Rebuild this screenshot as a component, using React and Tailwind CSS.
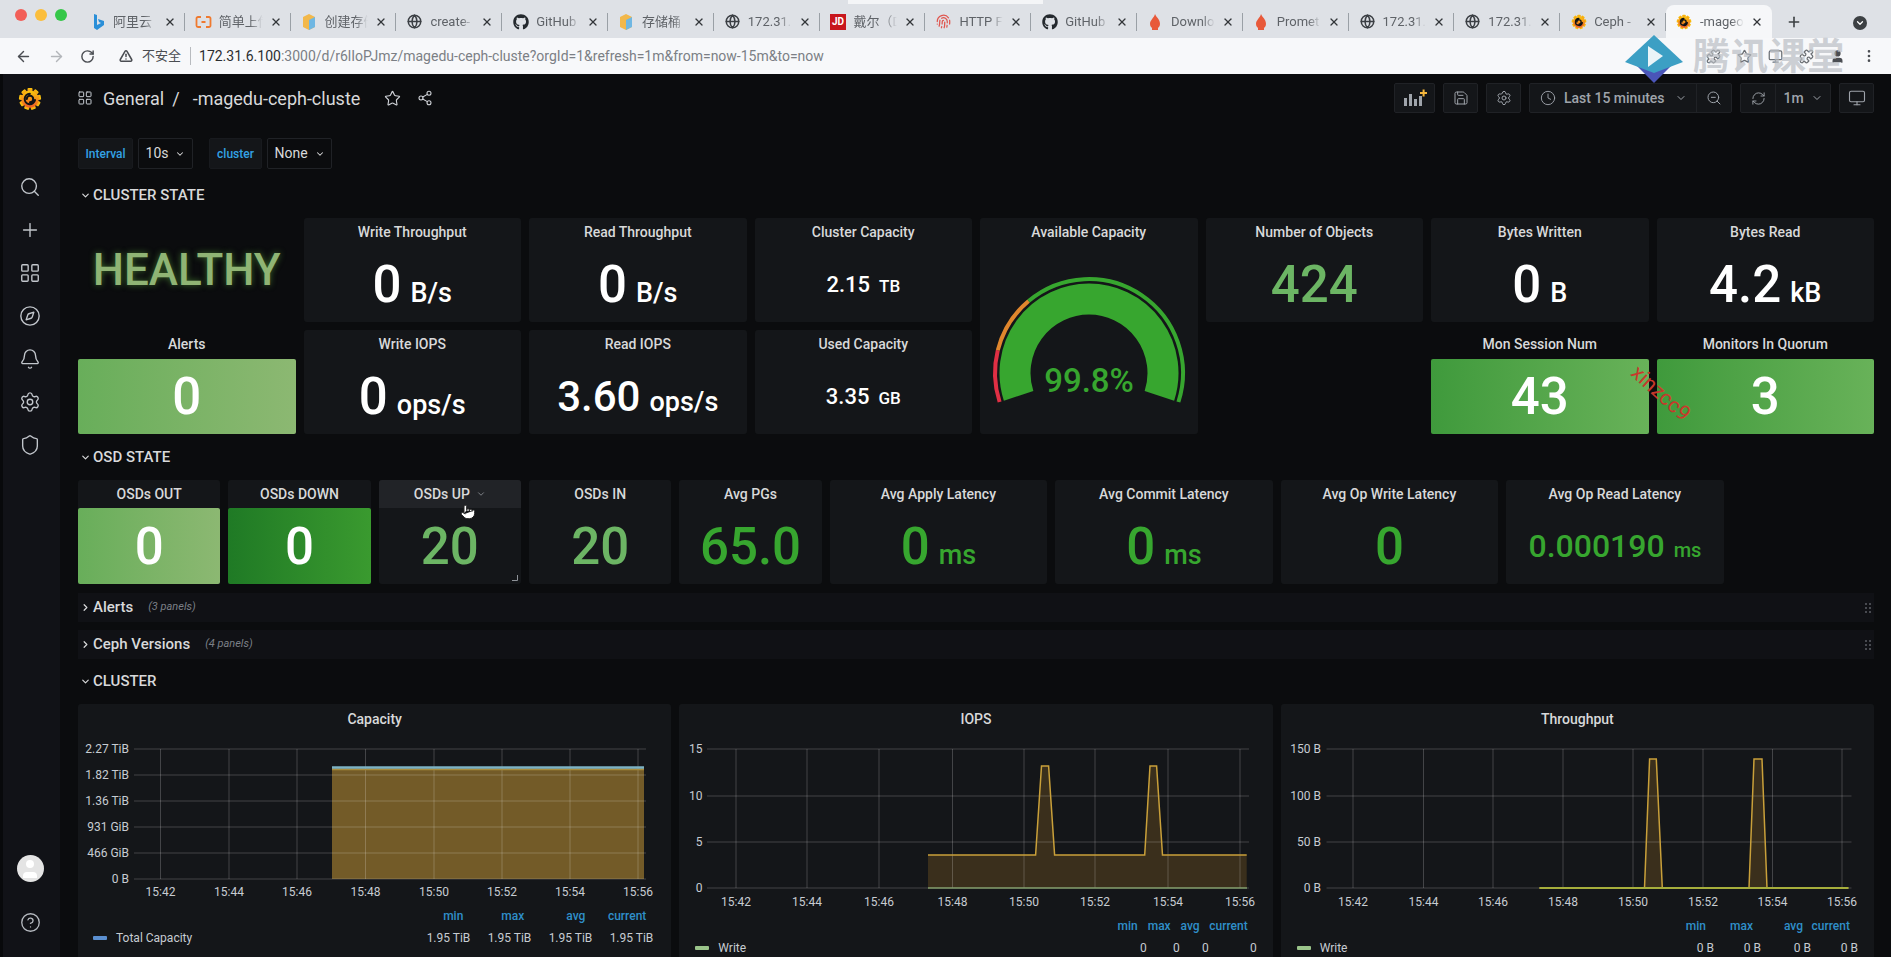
import {
  ArrowLeft, ArrowRight, Bell, ChevronDown, ChevronRight, CircleHelp, Clock, Compass, EllipsisVertical,
  Globe, LayoutGrid, Monitor, Plus, Pointer, Puzzle, RefreshCw, RotateCw, Save, Search, Settings,
  Share2, Shield, Star, TriangleAlert, User, X, ZoomOut, Fingerprint,
} from "lucide-react";
import { FaGithub } from "react-icons/fa";

function GrafanaLogo({ size = 24 }) {
  const teeth = [0, 40, 80, 120, 160, 200, 240, 280, 320];
  return (
    <svg width={size} height={size} viewBox="0 0 24 24">
      <defs>
        <linearGradient id={`gf${size}`} x1="0" y1="1" x2="0" y2="0">
          <stop offset="0" stopColor="#f05a28" />
          <stop offset="1" stopColor="#fbca0a" />
        </linearGradient>
      </defs>
      {teeth.map((a) => (
        <rect key={a} x="9.5" y="1" width="5" height="6" rx="1" fill={`url(#gf${size})`} transform={`rotate(${a} 12 12)`} />
      ))}
      <circle cx="12" cy="12" r="8.6" fill={`url(#gf${size})`} />
      <path d="M17 13a5.2 5.2 0 1 1-5.2-6.2M8.8 12a3.2 3.2 0 1 1 3.2 3.2" fill="none" stroke="#111217" strokeWidth="2" strokeLinecap="round" />
    </svg>
  );
}

function TabIcon({ kind }) {
  if (kind === "bing")
    return (
      <svg width="16" height="18" viewBox="0 0 16 18">
        <path d="M4 1l3 1v10l4-2-2-1-1-3 6 2v4l-7 5-3-2z" fill="#2a8fd8" />
      </svg>
    );
  if (kind === "ali")
    return (
      <svg width="17" height="16" viewBox="0 0 17 16" fill="none" stroke="#ef7a30" strokeWidth="1.8">
        <path d="M6 3H3a1.5 1.5 0 0 0-1.5 1.5v7A1.5 1.5 0 0 0 3 13h3M11 3h3a1.5 1.5 0 0 1 1.5 1.5v7A1.5 1.5 0 0 1 14 13h-3M6.5 8h4" />
      </svg>
    );
  if (kind === "doc")
    return (
      <svg width="16" height="18" viewBox="0 0 16 18">
        <path d="M2 4l6-3 6 3v10l-6 3-6-3z" fill="#f2b84b" />
        <path d="M8 7l6-3v10l-6 3z" fill="#6fb7e3" />
      </svg>
    );
  if (kind === "globe") return <Globe size={15} strokeWidth={2.4} className="text-[#3b3f44]" />;
  if (kind === "gh") return <FaGithub size={16} className="text-[#24292e]" />;
  if (kind === "jd")
    return <span className="flex h-[16px] w-[16px] items-center justify-center bg-[#c8161d] text-[10px] font-bold text-white">JD</span>;
  if (kind === "http") return <Fingerprint size={15} className="text-[#e0554e]" />;
  if (kind === "prom")
    return (
      <svg width="14" height="18" viewBox="0 0 14 18">
        <path d="M7 1c1 3 5 5 5 10a5 5 0 0 1-10 0C2 7 6 5 7 1z" fill="#e8593a" />
        <rect x="4" y="15" width="6" height="2" fill="#e8593a" />
      </svg>
    );
  return <GrafanaLogo size={16} />;
}

const tabs = [
  ["bing", "阿里云"], ["ali", "简单上传"], ["doc", "创建存储"], ["globe", "create-"],
  ["gh", "GitHub"], ["doc", "存储桶"], ["globe", "172.31."], ["jd", "戴尔（D"],
  ["http", "HTTP F"], ["gh", "GitHub"], ["prom", "Downlo"], ["prom", "Promet"],
  ["globe", "172.31."], ["globe", "172.31."], ["gf", "Ceph -"], ["gf", "-mageo"],
];

function BrowserBar() {
  return (
    <>
      <div className="relative flex h-[38px] shrink-0 items-end bg-[#dee1e6]">
        <div className="absolute left-[848px] top-0 h-[4px] w-[195px] bg-[#f4f5f7]" />
        <div className="flex w-[79px] gap-[8px] self-center pb-[8px] pl-[15px]">
          <span className="h-[12px] w-[12px] shrink-0 rounded-full bg-[#f25f58]" />
          <span className="h-[12px] w-[12px] shrink-0 rounded-full bg-[#fbbe3c]" />
          <span className="h-[12px] w-[12px] shrink-0 rounded-full bg-[#35c749]" />
        </div>
        {tabs.map(([icon, label], i) => (
          <div
            key={i}
            className={
              i === 15
                ? "flex h-[33px] w-[105.8px] items-center gap-[7px] rounded-t-lg bg-[#f6f7f9] pl-[10px] pr-[9px]"
                : "flex h-[33px] w-[105.8px] items-center gap-[7px] pl-[10px] pr-[9px] [background:linear-gradient(#9aa0a6,#9aa0a6)_right_8px/1px_18px_no-repeat]"
            }
          >
            <span className="flex w-[17px] shrink-0 justify-center"><TabIcon kind={icon} /></span>
            <span className="min-w-0 flex-1 overflow-hidden whitespace-nowrap text-[13px] text-[#5f6368] [mask-image:linear-gradient(to_right,black_70%,transparent)]">
              {label}
            </span>
            <X size={12} strokeWidth={2.6} className="shrink-0 text-[#33363a]" />
          </div>
        ))}
        <Plus size={16} strokeWidth={2.4} className="mb-[8px] ml-[14px] text-[#3c4043]" />
        <span className="mb-[8px] ml-[51px] flex h-[14px] w-[14px] items-center justify-center rounded-full bg-[#3c4043]">
          <ChevronDown size={10} strokeWidth={3} className="text-white" />
        </span>
      </div>
      <div className="relative flex h-[36px] shrink-0 items-center bg-[#f7f8fa] text-[#5f6368]">
        <ArrowLeft size={17} className="ml-[15px] text-[#4a4d52]" />
        <ArrowRight size={17} className="ml-[16px] text-[#b3b6ba]" />
        <RotateCw size={15} strokeWidth={2.3} className="ml-[15px] text-[#4a4d52]" />
        <TriangleAlert size={14} strokeWidth={2.6} className="ml-[24px] text-[#4a4d52]" />
        <span className="ml-[9px] text-[13px] text-[#4a4d52]">不安全</span>
        <span className="ml-[9px] h-[18px] w-px bg-[#b8bbbf]" />
        <span className="ml-[8px] whitespace-nowrap text-[14px] text-[#7b7f85]">
          <span className="text-[#2b2d30]">172.31.6.100</span>:3000/d/r6lIoPJmz/magedu-ceph-cluste?orgId=1&amp;refresh=1m&amp;from=now-15m&amp;to=now
        </span>
        <div className="ml-auto flex items-center gap-[16px] pr-[14px]">
          <Puzzle size={15} className="text-[#6b6f74]" />
          <Star size={15} className="text-[#6b6f74]" />
          <Monitor size={15} className="text-[#6b6f74]" />
          <Puzzle size={15} className="text-[#6b6f74]" />
          <User size={15} fill="currentColor" className="text-[#4a4d52]" />
          <EllipsisVertical size={16} className="text-[#4a4d52]" />
        </div>
        {/* video watermark over the toolbar */}
        <svg width="60" height="50" viewBox="0 0 60 50" className="absolute left-[1624px] top-[-3px]">
          <path d="M12 30l18 18 18-18-4-4-14 8-8-8z" fill="#4a55b8" />
          <path d="M30 0l29 27-29 11L1 27z" fill="#3c9fc4" />
          <path d="M24 11l15 10-15 11z" fill="#eaf4f8" />
        </svg>
        <span className="absolute left-[1693px] top-[1px] text-[37px] font-bold leading-none tracking-[1px] text-[#b9bdc3]/70">腾讯课堂</span>
      </div>
    </>
  );
}

const sideIcons = [Search, Plus, LayoutGrid, Compass, Bell, Settings, Shield];

function Sidebar() {
  return (
    <div className="flex w-[60px] shrink-0 flex-col items-center border-l-[3px] border-[#08090b] bg-[#111217] pr-[3px]">
      <div className="mt-[13px]"><GrafanaLogo size={24} /></div>
      <div className="mt-[65px] flex flex-col items-center gap-[21px]">
        {sideIcons.map((Icon, i) => (
          <Icon key={i} size={22} strokeWidth={1.5} className="text-[#c2c6cc]" />
        ))}
      </div>
      <div className="mt-auto mb-[24px] flex flex-col items-center gap-[30px]">
        <span className="flex h-[27px] w-[27px] items-center justify-center overflow-hidden rounded-full bg-[#e4e4e4]">
          <User size={24} fill="#fff" strokeWidth={0} />
        </span>
        <CircleHelp size={21} strokeWidth={1.5} className="text-[#b6bac0]" />
      </div>
    </div>
  );
}

function ToolBtn({ children, className = "" }) {
  return (
    <div className={`flex h-[30px] items-center justify-center rounded-[2px] border border-[#202226] bg-[#141619] text-[#9fa4ab] ${className}`}>
      {children}
    </div>
  );
}

function TopBar() {
  return (
    <div className="mt-[9px] flex h-[30px] items-center">
      <LayoutGrid size={16} strokeWidth={1.5} className="ml-[-1px] text-[#c7ccd2]" />
      <span className="ml-[10px] text-[18px] text-[#d8d9da]">General</span>
      <span className="ml-[8px] text-[18px] text-[#d8d9da]">/</span>
      <span className="ml-[13px] text-[18px] text-[#d8d9da]">-magedu-ceph-cluste</span>
      <Star size={17} strokeWidth={1.6} className="ml-[24px] text-[#d0d3d8]" />
      <Share2 size={16} strokeWidth={1.6} className="ml-[16px] text-[#d0d3d8]" />
      <div className="ml-auto flex items-center gap-[8px]">
        <ToolBtn className="w-[41px]">
          <svg width="24" height="18" viewBox="0 0 24 18">
            <path d="M1 9h3v8H1zM6 5h3v12H6zM11 10h3v7h-3zM16 7h3v10h-3z" fill="#9fa4ab" />
            <path d="M17 3h2.6V.6h2V3H24v2h-2.4v2.4h-2V5H17z" fill="#f5b73d" />
          </svg>
        </ToolBtn>
        <ToolBtn className="w-[35px]"><Save size={16} strokeWidth={1.5} /></ToolBtn>
        <ToolBtn className="w-[35px]"><Settings size={16} strokeWidth={1.5} /></ToolBtn>
        <ToolBtn className="w-[203px]">
          <div className="flex h-full w-[167px] items-center border-r border-[#202226] pl-[10px] text-[14px] font-medium">
            <Clock size={16} strokeWidth={1.4} />
            <span className="ml-[8px]">Last 15 minutes</span>
            <ChevronDown size={12} className="ml-[10px]" />
          </div>
          <div className="flex flex-1 justify-center"><ZoomOut size={16} strokeWidth={1.5} /></div>
        </ToolBtn>
        <ToolBtn className="w-[91px]">
          <div className="flex h-full w-[35px] items-center justify-center border-r border-[#202226]"><RefreshCw size={15} strokeWidth={1.5} /></div>
          <div className="flex flex-1 items-center justify-center gap-[7px] text-[14px] font-medium">1m <ChevronDown size={12} /></div>
        </ToolBtn>
        <ToolBtn className="w-[35px]"><Monitor size={18} strokeWidth={1.5} /></ToolBtn>
      </div>
    </div>
  );
}

function VarLabel({ children, className }) {
  return (
    <div className={`flex h-[31px] items-center justify-center rounded-[2px] border border-[#181a1e] bg-[#141619] text-[12px] font-medium text-[#33a2e5] ${className}`}>
      {children}
    </div>
  );
}

function VarValue({ children, className }) {
  return (
    <div className={`flex h-[31px] items-center justify-center gap-[7px] rounded-[2px] border border-[#202226] bg-[#0b0c0e] text-[14px] text-[#d8d9da] ${className}`}>
      {children}
      <ChevronDown size={10} strokeWidth={2.5} />
    </div>
  );
}

function SectionTitle({ children, className = "" }) {
  return (
    <div className={`flex h-[26px] items-center pl-[2px] text-[15px] font-medium text-[#d8d9da] ${className}`}>
      <ChevronDown size={11} strokeWidth={2.6} className="mr-[2px] shrink-0" />
      {children}
    </div>
  );
}

function CollapsedRow({ title, count }) {
  return (
    <div className="flex h-[29px] items-center bg-[#101115] pl-[2px]">
      <ChevronRight size={11} strokeWidth={2.6} className="mr-[2px] text-[#d8d9da]" />
      <span className="text-[15px] font-medium text-[#d8d9da]">{title}</span>
      <span className="ml-[15px] text-[11px] italic text-[#7b8087]">{count}</span>
      <div className="ml-auto mr-[3px] grid grid-cols-2 gap-[2px] opacity-60">
        {[0, 1, 2, 3, 4, 5].map((d) => (
          <span key={d} className="h-[2px] w-[2px] rounded-full bg-[#8e9298]" />
        ))}
      </div>
    </div>
  );
}

// big number with a smaller unit, the usual stat panel value
function Val({ v, u, vc = "text-[51px]", uc = "text-[27px]", color = "text-white" }) {
  return (
    <span className={`flex items-baseline font-medium leading-none ${color}`}>
      <span className={vc}>{v}</span>
      {u && <span className={`ml-[9px] ${uc}`}>{u}</span>}
    </span>
  );
}

function Stat({ title, className = "", titleH = "h-[29px]", children, hover }) {
  return (
    <div className={`relative flex flex-col overflow-hidden rounded-[3px] bg-[#141619] ${className}`}>
      <div className={`flex shrink-0 items-center justify-center gap-[6px] text-[14px] font-medium text-[#d8d9da] ${titleH} ${hover ? "bg-[#212327]" : ""}`}>
        {title}
        {hover && <ChevronDown size={10} className="text-[#8e9298]" />}
      </div>
      <div className="flex flex-1 items-center justify-center">{children}</div>
      {hover && (
        <svg width="6" height="6" viewBox="0 0 6 6" className="absolute bottom-[3px] right-[3px]">
          <path d="M5.5 0v5.5H0" fill="none" stroke="#8e9298" />
        </svg>
      )}
    </div>
  );
}

function ColorBox({ bg, children }) {
  return (
    <div className={`flex h-full w-full items-center justify-center self-stretch rounded-[2px] text-[51px] font-medium leading-none text-white ${bg}`}>
      {children}
    </div>
  );
}

const CX = 1089;
const CY = 373;
const polar = (r, deg) => {
  const a = (deg * Math.PI) / 180;
  return `${(CX + r * Math.cos(a)).toFixed(1)} ${(CY - r * Math.sin(a)).toFixed(1)}`;
};
const arc = (r, from, to) => `M${polar(r, from)} A${r} ${r} 0 ${from - to > 180 ? 1 : 0} 1 ${polar(r, to)}`;

function Gauge() {
  return (
    <svg viewBox="980 247 218 187" className="h-[187px] w-[218px]">
      <path d={arc(74, 198, -18)} fill="none" stroke="#37a62f" strokeWidth="31" />
      <path d={arc(94, 198, 166)} fill="none" stroke="#e02f44" strokeWidth="4" />
      <path d={arc(94, 166, 130)} fill="none" stroke="#e0862d" strokeWidth="4" />
      <path d={arc(94, 130, -18)} fill="none" stroke="#37a62f" strokeWidth="4" />
      <text x={CX} y="392" textAnchor="middle" fontSize="33" fontWeight="500" fill="#37a62f" fontFamily="Roboto, sans-serif">99.8%</text>
    </svg>
  );
}

function AxisLabels({ ys, xs, yEnd, xY }) {
  return (
    <g fontSize="12" fill="#c7ccd2" fontFamily="Roboto, sans-serif">
      {ys.map(([label, y]) => (
        <text key={label} x={yEnd} y={y + 4} textAnchor="end">{label}</text>
      ))}
      {xs.map(([label, x]) => (
        <text key={label} x={x} y={xY} textAnchor="middle">{label}</text>
      ))}
    </g>
  );
}

function GridLines({ ys, xs, left, right, top, bottom }) {
  return (
    <g stroke="#fff" strokeOpacity="0.2">
      {ys.map(([label, y]) => (
        <line key={label} x1={left} x2={right} y1={y} y2={y} />
      ))}
      {xs.map(([label, x]) => (
        <line key={label} x1={x} x2={x} y1={top} y2={bottom} />
      ))}
    </g>
  );
}

const times = ["15:42", "15:44", "15:46", "15:48", "15:50", "15:52", "15:54", "15:56"];
const withX = (arr) => times.map((t, i) => [t, arr[i]]);

function CapacityChart() {
  const ys = [["2.27 TiB", 749], ["1.82 TiB", 775], ["1.36 TiB", 801], ["931 GiB", 827], ["466 GiB", 853], ["0 B", 879]];
  const xs = withX([160.5, 229, 297, 365.5, 434, 502, 570, 638]);
  return (
    <svg viewBox="78 734 594 171" className="h-[171px] w-[594px] shrink-0">
      <rect x="332" y="767" width="312" height="112" fill="#735b28" />
      <GridLines ys={ys} xs={xs} left={134} right={646} top={749} bottom={879} />
      <line x1="332" x2="644" y1="769.5" y2="769.5" stroke="#a98c3b" strokeWidth="1.5" />
      <line x1="332" x2="644" y1="767.5" y2="767.5" stroke="#7db3c4" strokeWidth="2.5" />
      <AxisLabels ys={ys} xs={xs} yEnd={129} xY={896} />
    </svg>
  );
}

function IopsChart() {
  const ys = [["15", 749], ["10", 796], ["5", 842], ["0", 888]];
  const xs = withX([735, 806, 878, 951.5, 1023, 1094, 1167, 1239]);
  const line = "M927 855H1034.6L1040.5 766H1047.6L1053.6 855H1143.7L1149 766H1155.6L1161.5 855H1245.7";
  return (
    <svg viewBox="678 734 596 181" className="h-[181px] w-[596px] shrink-0">
      <path d={`${line}V888H927Z`} fill="#3a2f1c" />
      <GridLines ys={ys} xs={xs} left={706} right={1248} top={749} bottom={888} />
      <path d={line} fill="none" stroke="#c9a03a" strokeWidth="1.5" />
      <line x1="927" x2="1246" y1="888" y2="888" stroke="#7f9a68" strokeWidth="1.5" />
      <AxisLabels ys={ys} xs={xs} yEnd={701.5} xY={906} />
    </svg>
  );
}

function ThroughputChart() {
  const ys = [["150 B", 749], ["100 B", 796], ["50 B", 842], ["0 B", 888]];
  const xs = withX([1352, 1422.5, 1492, 1562, 1632, 1702, 1771.5, 1841]);
  const line = "M1538.5 888H1643.5L1648.6 759H1655.3L1661.3 888H1748L1753 759H1761L1766 888H1847.4";
  return (
    <svg viewBox="1280 734 595 181" className="h-[181px] w-[595px] shrink-0">
      <path d={`${line}Z`} fill="#3a2f1c" />
      <GridLines ys={ys} xs={xs} left={1325.5} right={1850.5} top={749} bottom={888} />
      <path d={line} fill="none" stroke="#c9a03a" strokeWidth="1.5" />
      <line x1="1538.5" x2="1847.4" y1="888" y2="888" stroke="#a6ae3c" strokeWidth="2" />
      <AxisLabels ys={ys} xs={xs} yEnd={1320} xY={906} />
    </svg>
  );
}

function Legend({ name, swatch, values, widths, headPr, valPr, swatchMl }) {
  const heads = ["min", "max", "avg", "current"];
  return (
    <div className="text-[12px]">
      <div className={`flex h-[22px] items-center justify-end font-medium text-[#2f8fc9] ${headPr}`}>
        {heads.map((h, i) => (
          <span key={h} className={`text-right ${widths[i]}`}>{h}</span>
        ))}
      </div>
      <div className={`flex h-[22px] items-center text-[#c7ccd2] ${valPr}`}>
        <span className={`h-[4px] w-[14px] rounded-[1px] ${swatch} ${swatchMl}`} />
        <span className="ml-[9px] mr-auto">{name}</span>
        {values.map((v, i) => (
          <span key={i} className={`text-right ${widths[i]}`}>{v}</span>
        ))}
      </div>
    </div>
  );
}

function GraphPanel({ title, className = "", children }) {
  return (
    <div className={`h-[300px] overflow-hidden rounded-[3px] bg-[#141619] ${className}`}>
      <div className="flex h-[30px] items-center justify-center text-[14px] font-medium text-[#d8d9da]">{title}</div>
      {children}
    </div>
  );
}

const green = "text-[#37a62f]";
const softGreen = "text-[#6cb564]";

export default function App() {
  return (
    <div className="relative flex h-screen w-full flex-col overflow-hidden bg-[#0b0c0e] font-['Roboto','Noto_Sans_CJK_SC',sans-serif]">
      <BrowserBar />
      <div className="flex min-h-0 flex-1">
        <Sidebar />
        <div className="min-w-0 flex-1 pl-[18px] pr-[17px]">
          <TopBar />

          <div className="mt-[25px] flex">
            <VarLabel className="w-[55px]">Interval</VarLabel>
            <VarValue className="ml-[5px] w-[55px]">10s</VarValue>
            <VarLabel className="ml-[16px] w-[53px]">cluster</VarLabel>
            <VarValue className="ml-[5px] w-[65px]">None</VarValue>
          </div>

          <SectionTitle className="mt-[13px] mb-[10px]">CLUSTER STATE</SectionTitle>
          <div className="grid grid-cols-[repeat(24,minmax(0,1fr))] grid-rows-[104px_104px] gap-x-[8px] gap-y-[8px]">
            <div className="col-span-3 flex items-center justify-center pb-[1px]">
              <span className="text-[44px] font-medium leading-none text-[#8fb474] [text-shadow:0_0_6px_#3c6b2a]">HEALTHY</span>
            </div>
            <Stat title="Write Throughput" className="col-span-3"><Val v="0" u="B/s" /></Stat>
            <Stat title="Read Throughput" className="col-span-3"><Val v="0" u="B/s" /></Stat>
            <Stat title="Cluster Capacity" className="col-span-3"><Val v="2.15" u="TB" vc="text-[22px]" uc="text-[17px]" /></Stat>
            <div className="col-span-3 row-span-2 flex flex-col rounded-[3px] bg-[#141619]">
              <div className="flex h-[29px] shrink-0 items-center justify-center text-[14px] font-medium text-[#d8d9da]">Available Capacity</div>
              <Gauge />
            </div>
            <Stat title="Number of Objects" className="col-span-3"><Val v="424" color={softGreen} /></Stat>
            <Stat title="Bytes Written" className="col-span-3"><Val v="0" u="B" /></Stat>
            <Stat title="Bytes Read" className="col-span-3"><Val v="4.2" u="kB" /></Stat>

            <div className="col-span-3 flex flex-col">
              <div className="flex h-[29px] shrink-0 items-center justify-center text-[14px] font-medium text-[#d8d9da]">Alerts</div>
              <div className="flex-1"><ColorBox bg="bg-gradient-to-r from-[#68ae5a] to-[#8cb872]">0</ColorBox></div>
            </div>
            <Stat title="Write IOPS" className="col-span-3"><Val v="0" u="ops/s" /></Stat>
            <Stat title="Read IOPS" className="col-span-3"><Val v="3.60" u="ops/s" vc="text-[42px]" /></Stat>
            <Stat title="Used Capacity" className="col-span-3"><Val v="3.35" u="GB" vc="text-[22px]" uc="text-[17px]" /></Stat>
            <div className="col-span-3 col-start-19 flex flex-col">
              <div className="flex h-[29px] shrink-0 items-center justify-center text-[14px] font-medium text-[#d8d9da]">Mon Session Num</div>
              <div className="flex-1"><ColorBox bg="bg-gradient-to-r from-[#3f9a3c] to-[#68b259]">43</ColorBox></div>
            </div>
            <div className="col-span-3 flex flex-col">
              <div className="flex h-[29px] shrink-0 items-center justify-center text-[14px] font-medium text-[#d8d9da]">Monitors In Quorum</div>
              <div className="flex-1"><ColorBox bg="bg-gradient-to-r from-[#3f9a3c] to-[#68b259]">3</ColorBox></div>
            </div>
          </div>

          <SectionTitle className="mt-[10px] mb-[10px]">OSD STATE</SectionTitle>
          <div className="grid h-[104px] grid-cols-[repeat(24,minmax(0,1fr))] gap-x-[8px]">
            <div className="col-span-2 flex flex-col">
              <div className="flex h-[28px] shrink-0 items-center justify-center rounded-t-[3px] bg-[#141619] text-[14px] font-medium text-[#d8d9da]">OSDs OUT</div>
              <div className="flex-1"><ColorBox bg="bg-gradient-to-r from-[#68ae5a] to-[#8cb872]">0</ColorBox></div>
            </div>
            <div className="col-span-2 flex flex-col">
              <div className="flex h-[28px] shrink-0 items-center justify-center rounded-t-[3px] bg-[#141619] text-[14px] font-medium text-[#d8d9da]">OSDs DOWN</div>
              <div className="flex-1"><ColorBox bg="bg-gradient-to-r from-[#1f7a25] to-[#3a9a2f]">0</ColorBox></div>
            </div>
            <Stat title="OSDs UP" className="col-span-2" titleH="h-[28px]" hover><Val v="20" color={softGreen} /></Stat>
            <Stat title="OSDs IN" className="col-span-2" titleH="h-[28px]"><Val v="20" color={softGreen} /></Stat>
            <Stat title="Avg PGs" className="col-span-2" titleH="h-[28px]"><Val v="65.0" color={green} /></Stat>
            <Stat title="Avg Apply Latency" className="col-span-3" titleH="h-[28px]"><Val v="0" u="ms" color={green} /></Stat>
            <Stat title="Avg Commit Latency" className="col-span-3" titleH="h-[28px]"><Val v="0" u="ms" color={green} /></Stat>
            <Stat title="Avg Op Write Latency" className="col-span-3" titleH="h-[28px]"><Val v="0" color={green} /></Stat>
            <Stat title="Avg Op Read Latency" className="col-span-3" titleH="h-[28px]"><Val v="0.000190" u="ms" vc="text-[32px]" uc="text-[20px]" color={green} /></Stat>
          </div>

          <div className="mt-[9px] flex flex-col gap-[8px]">
            <CollapsedRow title="Alerts" count="(3 panels)" />
            <CollapsedRow title="Ceph Versions" count="(4 panels)" />
          </div>

          <SectionTitle className="mt-[9px] mb-[10px]">CLUSTER</SectionTitle>
          <div className="grid grid-cols-[repeat(24,minmax(0,1fr))] gap-x-[8px]">
            <GraphPanel title="Capacity" className="col-span-8">
              <CapacityChart />
              <Legend
                name="Total Capacity"
                swatch="bg-[#5b8fd0]"
                swatchMl="ml-[15px]"
                values={["1.95 TiB", "1.95 TiB", "1.95 TiB", "1.95 TiB"]}
                widths={["w-[61px]", "w-[61px]", "w-[61px]", "w-[61px]"]}
                headPr="pr-[25px]"
                valPr="pr-[18px]"
              />
            </GraphPanel>
            <GraphPanel title="IOPS" className="col-span-8">
              <IopsChart />
              <Legend
                name="Write"
                swatch="bg-[#9ac48a]"
                swatchMl="ml-[16px]"
                values={["0", "0", "0", "0"]}
                widths={["w-[33px]", "w-[33px]", "w-[29px]", "w-[48px]"]}
                headPr="pr-[25px]"
                valPr="pr-[16px]"
              />
            </GraphPanel>
            <GraphPanel title="Throughput" className="col-span-8">
              <ThroughputChart />
              <Legend
                name="Write"
                swatch="bg-[#9ac48a]"
                swatchMl="ml-[16px]"
                values={["0 B", "0 B", "0 B", "0 B"]}
                widths={["w-[47px]", "w-[47px]", "w-[50px]", "w-[47px]"]}
                headPr="pr-[24px]"
                valPr="pr-[16px]"
              />
            </GraphPanel>
          </div>
        </div>
      </div>

      {/* overlays: mouse cursor and the red user mark of the video */}
      <Pointer size={16} fill="#fff" strokeWidth={1.5} className="absolute left-[460px] top-[504px] text-[#222]" />
      <span className="absolute left-[1625px] top-[383px] rotate-[42deg] text-[21px] leading-none text-[#c8392b]">xinzcc9</span>
    </div>
  );
}
